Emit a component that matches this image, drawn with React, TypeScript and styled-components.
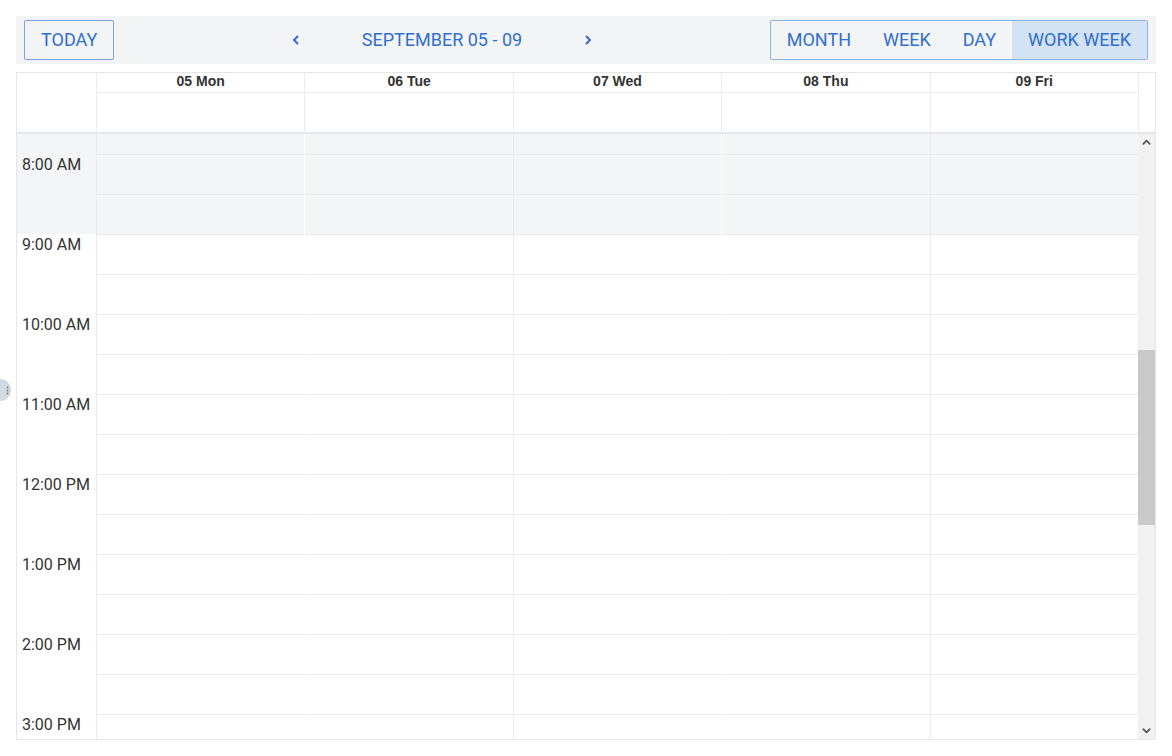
import { useLayoutEffect, useRef } from 'react';
import styled, { createGlobalStyle } from 'styled-components';

const blue = '#2f6fd0';
const line = '#ebebeb';
const offBg = '#f4f5f7';

const GlobalStyle = createGlobalStyle`
  html, body {
    margin: 0;
    background: #fff;
    font-family: Roboto, 'Liberation Sans', sans-serif;
  }
  * { box-sizing: border-box; }
`;

const Page = styled.div`
  position: relative;
  padding: 16px;
  width: 1172px;
  height: 756px;
  overflow: hidden;
`;

const Toolbar = styled.div`
  display: flex;
  align-items: center;
  justify-content: space-between;
  height: 48px;
  padding: 0 8px;
  background: #f3f4f6;
  margin-bottom: 8px;
`;

const OutlineButton = styled.button`
  height: 40px;
  padding: 0 16px 2px;
  border: 1px solid #78a4e4;
  border-radius: 2px;
  background: transparent;
  color: ${blue};
  font-family: Roboto, sans-serif;
  font-size: 18px;
  cursor: pointer;
`;

const Nav = styled.div`
  display: flex;
  align-items: center;
`;

const Arrow = styled.button`
  width: 40px;
  height: 40px;
  border: none;
  background: transparent;
  color: ${blue};
  display: flex;
  align-items: center;
  justify-content: center;
  cursor: pointer;
`;

const Period = styled.div`
  color: ${blue};
  font-size: 18px;
  padding: 0 46px 2px;
`;

const ViewGroup = styled.div`
  display: flex;
  height: 40px;
  border: 1px solid #8ab2ea;
  border-radius: 2px;
  overflow: hidden;
`;

const ViewButton = styled.button<{ $active?: boolean }>`
  border: none;
  padding: 0 16px 2px;
  background: ${(p) => (p.$active ? '#d3e2f5' : 'transparent')};
  color: ${blue};
  font-family: Roboto, sans-serif;
  font-size: 18px;
  cursor: pointer;
`;

const Calendar = styled.div`
  border: 1px solid #e4e6ea;
  height: 668px;
  display: flex;
  flex-direction: column;
`;

const Header = styled.div`
  display: grid;
  grid-template-columns: 79px repeat(5, 1fr) 17px;
  border-bottom: 2px solid #e5e7eb;
`;

const HeaderCorner = styled.div``;

const HeaderDay = styled.div`
  display: flex;
  flex-direction: column;
  border-left: 1px solid ${line};
`;

const DayName = styled.div`
  height: 19px;
  line-height: 17px;
  text-align: center;
  font-family: 'Liberation Sans', Arial, sans-serif;
  font-weight: 700;
  font-size: 14px;
  color: #333;
`;

const AllDay = styled.div`
  height: 40px;
  border-top: 1px solid ${line};
`;

const HeaderEnd = styled.div`
  border-left: 1px solid ${line};
`;

const Body = styled.div`
  flex: 1;
  display: flex;
  min-height: 0;
`;

const ScrollArea = styled.div`
  flex: 1;
  overflow: hidden;
`;

const Grid = styled.div`
  display: grid;
  grid-template-columns: 79px repeat(5, 1fr);
`;

const Column = styled.div<{ $seam?: string }>`
  display: flex;
  flex-direction: column;
  border-left: 1px solid ${(p) => p.$seam || line};
`;

const Gutter = styled.div`
  display: flex;
  flex-direction: column;
`;

const GutterSlot = styled.div<{ $off?: boolean }>`
  height: 40px;
  padding: 2px 0 0 5px;
  font-size: 16px;
  line-height: 18px;
  color: #333;
  background: ${(p) => (p.$off ? offBg : '#fff')};
`;

const Slot = styled.div<{ $off?: boolean }>`
  height: 40px;
  border-top: 1px solid ${(p) => (p.$off ? '#e7e9ec' : line)};
  background: ${(p) => (p.$off ? offBg : '#fff')};
`;

const Scrollbar = styled.div`
  width: 17px;
  display: flex;
  flex-direction: column;
  background: #f1f1f1;
`;

const ScrollArrow = styled.div`
  height: 17px;
  display: flex;
  align-items: center;
  justify-content: center;
`;

const Track = styled.div`
  flex: 1;
  display: flex;
  flex-direction: column;
  padding: 199px 0 197px;
`;

const Thumb = styled.div`
  flex: 1;
  background: #c9c9c9;
`;

const SideHandle = styled.div`
  position: absolute;
  left: -11px;
  top: 379px;
  width: 22px;
  height: 22px;
  border-radius: 50%;
  background: #d3d9e1;
  display: flex;
  align-items: center;
  justify-content: flex-end;
  padding-right: 2px;
`;

const days = ['05 Mon', '06 Tue', '07 Wed', '08 Thu', '09 Fri'];

// half-hour rows from 7:30; everything before 9:00 is outside work hours
const hours = ['8:00 AM', '9:00 AM', '10:00 AM', '11:00 AM', '12:00 PM', '1:00 PM', '2:00 PM', '3:00 PM'];
const slots: { label?: string; off: boolean }[] = [{ off: true }];
hours.forEach((h, i) => {
  slots.push({ label: h, off: i === 0 });
  slots.push({ off: i === 0 });
});

const seams = [line, '#fff', line, '#fff', line];

const Chevron = ({ dir, size = 10, color = blue }: { dir: 'left' | 'right' | 'up' | 'down'; size?: number; color?: string }) => {
  const d = {
    left: 'M6.5 1.5 L3 5 L6.5 8.5',
    right: 'M3.5 1.5 L7 5 L3.5 8.5',
    up: 'M1.5 6.5 L5 3 L8.5 6.5',
    down: 'M1.5 3.5 L5 7 L8.5 3.5',
  }[dir];
  return (
    <svg width={size} height={size} viewBox="0 0 10 10">
      <path d={d} fill="none" stroke={color} strokeWidth={2} strokeLinecap="round" strokeLinejoin="round" />
    </svg>
  );
};

export default function App() {
  const scrollRef = useRef<HTMLDivElement>(null);

  useLayoutEffect(() => {
    if (scrollRef.current) scrollRef.current.scrollTop = 20;
  }, []);

  return (
    <Page>
      <GlobalStyle />
      <SideHandle>
        <svg width="3" height="9" viewBox="0 0 3 9">
          <circle cx="1.5" cy="1.5" r="1" fill="#7a828d" />
          <circle cx="1.5" cy="4.5" r="1" fill="#7a828d" />
          <circle cx="1.5" cy="7.5" r="1" fill="#7a828d" />
        </svg>
      </SideHandle>
      <Toolbar>
        <OutlineButton>TODAY</OutlineButton>
        <Nav>
          <Arrow><Chevron dir="left" /></Arrow>
          <Period>SEPTEMBER 05 - 09</Period>
          <Arrow><Chevron dir="right" /></Arrow>
        </Nav>
        <ViewGroup>
          <ViewButton>MONTH</ViewButton>
          <ViewButton>WEEK</ViewButton>
          <ViewButton>DAY</ViewButton>
          <ViewButton $active>WORK WEEK</ViewButton>
        </ViewGroup>
      </Toolbar>

      <Calendar>
        <Header>
          <HeaderCorner />
          {days.map((d) => (
            <HeaderDay key={d}>
              <DayName>{d}</DayName>
              <AllDay />
            </HeaderDay>
          ))}
          <HeaderEnd />
        </Header>

        <Body>
          <ScrollArea ref={scrollRef}>
            <Grid>
              <Gutter>
                {slots.map((s, i) => (
                  <GutterSlot key={i} $off={s.off}>{s.label}</GutterSlot>
                ))}
              </Gutter>
              {days.map((d, c) => (
                <Column key={d} $seam={seams[c]}>
                  {slots.map((s, i) => (
                    <Slot key={i} $off={s.off} />
                  ))}
                </Column>
              ))}
            </Grid>
          </ScrollArea>
          <Scrollbar>
            <ScrollArrow><Chevron dir="up" size={9} color="#555" /></ScrollArrow>
            <Track><Thumb /></Track>
            <ScrollArrow><Chevron dir="down" size={9} color="#555" /></ScrollArrow>
          </Scrollbar>
        </Body>
      </Calendar>
    </Page>
  );
}
